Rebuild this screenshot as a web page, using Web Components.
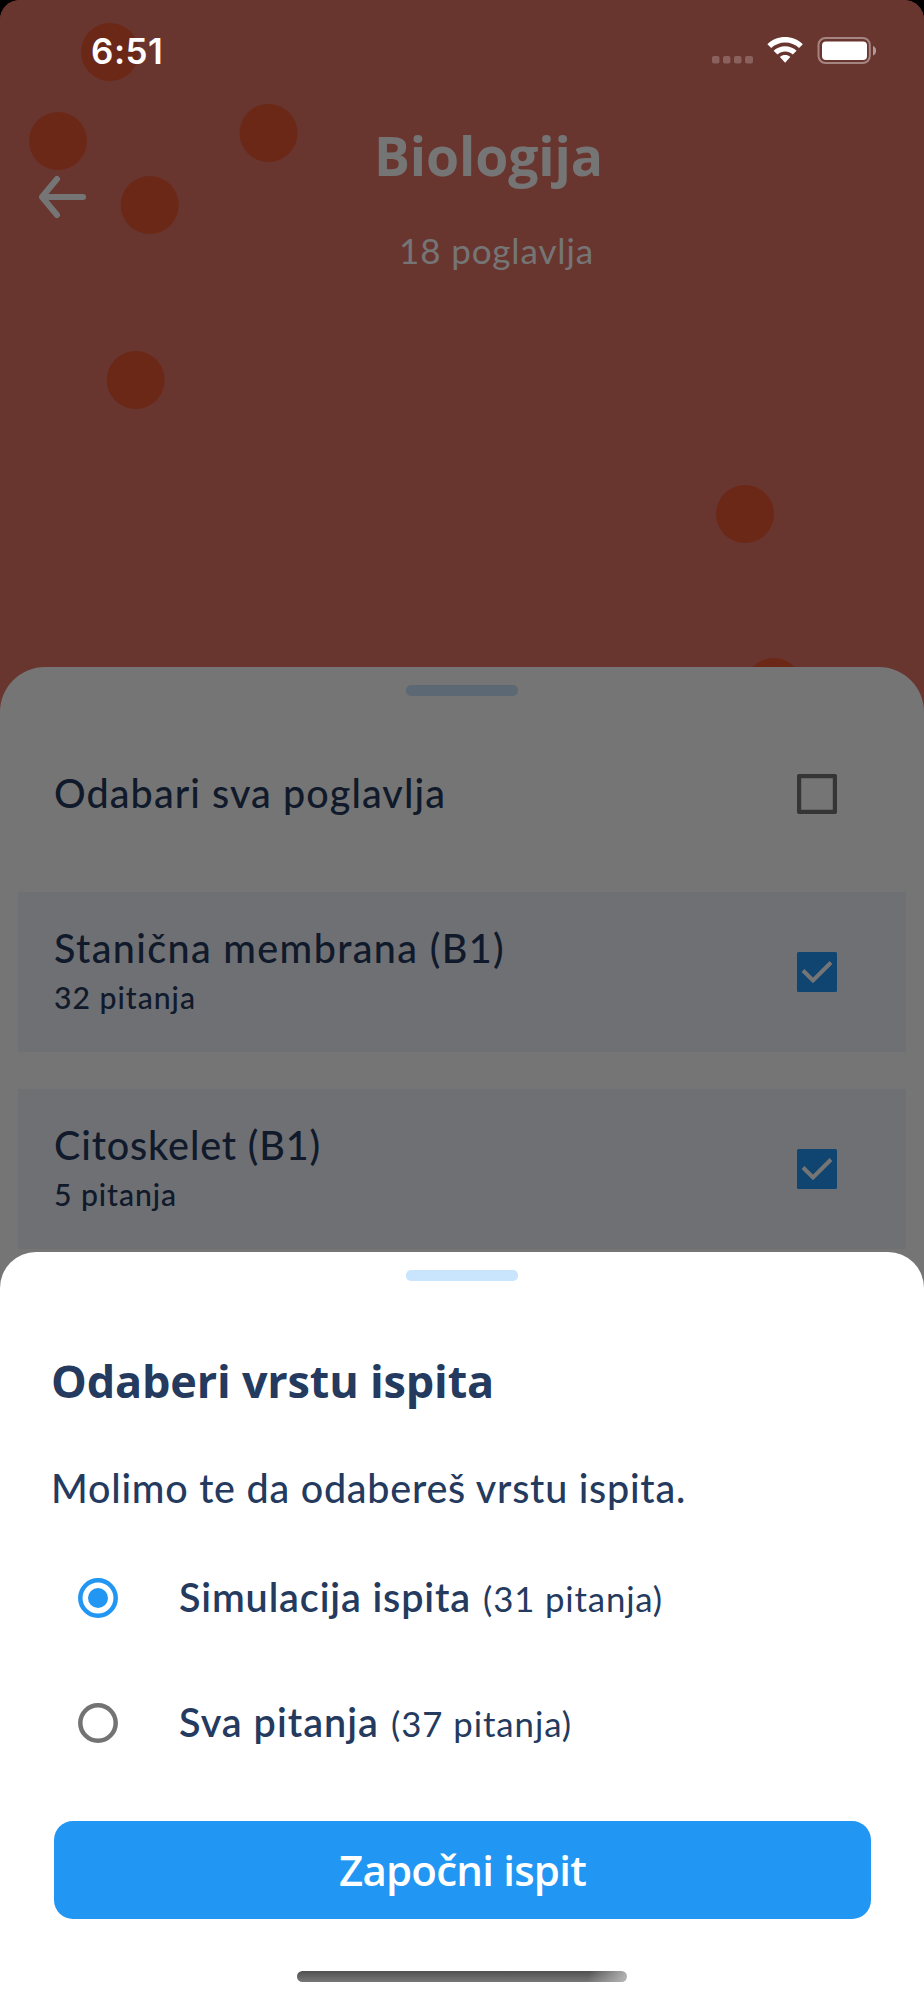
<!DOCTYPE html>
<html lang="hr">
<head>
  <meta charset="UTF-8">
  <meta name="viewport" content="width=device-width, initial-scale=1.0">
  <title>Biologija</title>
  <style>
    html { background: #000; }
    body {
      margin: 0;
      color: #243a5e;
      font-family: "Lato", sans-serif;
    }
  </style>
</head>
<body>
  <exam-screen>
    <status-bar slot="status">6:51</status-bar>
    <subject-header slot="page">
      <fit-text w="229" slot="title">Biologija</fit-text>
      <fit-text w="195" slot="subtitle">18 poglavlja</fit-text>
    </subject-header>
    <bottom-sheet slot="page" class="chapters">
      <chapter-row class="all"><fit-text w="392">Odabari sva poglavlja</fit-text></chapter-row>
      <chapter-row checked>
        <fit-text w="451">Stanična membrana (B1)</fit-text>
        <fit-text w="142" slot="count">32 pitanja</fit-text>
      </chapter-row>
      <chapter-row checked>
        <fit-text w="267">Citoskelet (B1)</fit-text>
        <fit-text w="123" slot="count">5 pitanja</fit-text>
      </chapter-row>
    </bottom-sheet>
    <bottom-sheet slot="dialog" class="dialog">
      <exam-dialog>
        <fit-text w="443" slot="title">Odaberi vrstu ispita</fit-text>
        <fit-text w="635" slot="message">Molimo te da odabereš vrstu ispita.</fit-text>
        <radio-option slot="options" checked>
          <fit-text w="292">Simulacija ispita</fit-text>
          <fit-text w="180" slot="note">(31 pitanja)</fit-text>
        </radio-option>
        <radio-option slot="options">
          <fit-text w="200">Sva pitanja</fit-text>
          <fit-text w="181" slot="note">(37 pitanja)</fit-text>
        </radio-option>
        <fit-text w="247" slot="action">Započni ispit</fit-text>
      </exam-dialog>
    </bottom-sheet>
  </exam-screen>

  <script>
    function define(name, html, setup) {
      customElements.define(name, class extends HTMLElement {
        constructor() {
          super();
          this.attachShadow({ mode: 'open' });
          this.shadowRoot.innerHTML = html;
        }

        connectedCallback() {
          if (setup) setup(this);
        }
      });
    }

    define('exam-screen', `
      <style>
        :host {
          display: block;
          position: relative;
          width: 924px;
          height: 2000px;
          overflow: hidden;
          border-radius: 20px 20px 0 0;
          background: #e47366;
        }
        .scrim {
          position: absolute;
          inset: 0;
          background: rgba(0, 0, 0, .54);
        }
        .overlay {
          position: absolute;
          inset: 0;
          display: flex;
          flex-direction: column;
          justify-content: space-between;
        }
        .home {
          position: absolute;
          left: 297px;
          bottom: 18px;
          width: 330px;
          height: 11px;
          border-radius: 6px;
          background:
            linear-gradient(100deg, transparent 88%, rgba(190, 190, 190, .9) 100%),
            linear-gradient(#505050, #777);
        }
      </style>
      <slot name="page"></slot>
      <div class="scrim"></div>
      <div class="overlay">
        <slot name="status"></slot>
        <slot name="dialog"></slot>
      </div>
      <div class="home"></div>
    `);

    define('status-bar', `
      <style>
        :host {
          display: flex;
          align-items: center;
          justify-content: space-between;
          box-sizing: border-box;
          height: 102px;
          padding: 0 48px 0 91px;
          color: #fff;
          font: 600 35px/40px "Inter", sans-serif;
          letter-spacing: .5px;
        }
        svg { display: block; }
      </style>
      <slot></slot>
      <svg width="166" height="30" viewBox="0 0 166 30" fill="#fff">
        <g fill-opacity=".22">
          <rect x="2" y="20" width="7.5" height="7.5" rx="2"/>
          <rect x="13" y="20" width="7.5" height="7.5" rx="2"/>
          <rect x="24" y="20" width="7.5" height="7.5" rx="2"/>
          <rect x="35" y="20" width="8" height="7.5" rx="2"/>
        </g>
        <path d="M57.4 8.2C67 -1.3 83 -1.3 92.8 8.2L89.1 12C81.3 4.6 69.2 4.6 61.2 12Z"/>
        <path d="M63.6 14.7C69.9 8.6 80.3 8.6 86.6 14.7L82.8 18.5C78.5 14.5 71.8 14.5 67.4 18.5Z"/>
        <path d="M69.9 21C72.8 18.4 77.4 18.4 80.3 21L75.1 26.7Z"/>
        <rect x="108.5" y="1.9" width="51.3" height="25.2" rx="7" fill="none" stroke="#fff" stroke-opacity=".4" stroke-width="2"/>
        <rect x="112" y="5.5" width="45" height="18.5" rx="4"/>
        <path d="M163 10C167.2 11.5 167.2 18 163 19.5Z" fill-opacity=".5"/>
      </svg>
    `);

    define('subject-header', `
      <style>
        :host {
          display: block;
          position: relative;
          height: 667px;
          color: #fff;
        }
        .dots {
          position: absolute;
          left: 0;
          top: 0;
          fill: #e95730;
        }
        .bar {
          position: relative;
          display: flex;
          align-items: flex-start;
        }
        .back { margin: 174px 0 0 36px; }
        .text {
          display: flex;
          flex-direction: column;
          margin-left: 286px;
          padding-top: 120px;
        }
        .title { font: 700 53.5px/72px "Open Sans", sans-serif; }
        .subtitle { margin: 36px 0 0 25px; font-size: 35px; line-height: 44px; }
      </style>
      <svg class="dots" width="924" height="760">
        <circle cx="110" cy="52" r="29"/>
        <circle cx="58" cy="141" r="29"/>
        <circle cx="268.5" cy="133" r="29"/>
        <circle cx="149.7" cy="205" r="29"/>
        <circle cx="135.7" cy="380" r="29"/>
        <circle cx="745" cy="514" r="29"/>
        <circle cx="773.7" cy="687" r="29"/>
      </svg>
      <div class="bar">
        <svg class="back" width="52" height="46" fill="none" stroke="#fff" stroke-width="6" stroke-linecap="round" stroke-linejoin="round">
          <path d="M21 5L6 23L21 41M6 23H47"/>
        </svg>
        <div class="text">
          <div class="title"><slot name="title"></slot></div>
          <div class="subtitle"><slot name="subtitle"></slot></div>
        </div>
      </div>
    `);

    // Sheet with rounded top corners and a drag handle
    define('bottom-sheet', `
      <style>
        :host {
          display: flex;
          flex-direction: column;
          position: relative;
          box-sizing: border-box;
          background: #fff;
        }
        :host(.chapters) { height: 1333px; border-radius: 45px 45px 0 0; }
        :host(.dialog) { height: 748px; border-radius: 36px 36px 0 0; }
        .handle {
          flex: none;
          align-self: center;
          width: 112px;
          height: 11px;
          margin-top: 18px;
          border-radius: 5px;
          background: #c8e5fd;
        }
      </style>
      <div class="handle"></div>
      <slot></slot>
    `);

    define('chapter-row', `
      <style>
        :host {
          display: flex;
          justify-content: space-between;
          align-items: center;
          box-sizing: border-box;
          height: 160px;
          margin: 0 18px 37px;
          padding: 0 69px 0 36px;
        }
        :host(.all) { margin-top: 18px; margin-bottom: 18px; }
        :host([checked]) { background: #f1f4fc; }
        .text { display: flex; flex-direction: column; }
        .name { margin-top: -2px; font-size: 39.5px; line-height: 50px; font-weight: 500; }
        .count { margin-top: 1px; font-size: 30.2px; line-height: 46px; font-weight: 500; }
        :host(.all) .count { display: none; }
        svg { display: block; }
      </style>
      <div class="text">
        <div class="name"><slot></slot></div>
        <div class="count"><slot name="count"></slot></div>
      </div>
      <svg width="40" height="40"></svg>
    `, (el) => {
      el.shadowRoot.querySelector('svg').innerHTML = el.hasAttribute('checked')
        ? '<rect width="40" height="40" rx="1.5" fill="#2296f3"/><path d="M6 18.5L16 28.5L34 10.5" fill="none" stroke="#fff" stroke-width="4"/>'
        : '<rect x="2" y="2" width="36" height="36" rx="1" fill="none" stroke="#737373" stroke-width="4.4"/>';
    });

    define('exam-dialog', `
      <style>
        :host { display: flex; flex-direction: column; padding: 0 53px; }
        .title { margin: 69px 0 0 -2px; font: 700 45px/62px "Open Sans", sans-serif; }
        .message { margin: 51px 0 0 -2px; font-size: 39.5px; line-height: 50px; font-weight: 500; }
        .options { display: flex; flex-direction: column; gap: 65px; margin-top: 55px; }
        button {
          height: 98px;
          margin: 68px 0 0 1px;
          padding: 0;
          border: 0;
          border-radius: 19px;
          background: #2296f3;
          color: #fff;
          font: 600 42px/60px "Open Sans", sans-serif;
        }
      </style>
      <div class="title"><slot name="title"></slot></div>
      <div class="message"><slot name="message"></slot></div>
      <div class="options"><slot name="options"></slot></div>
      <button><slot name="action"></slot></button>
    `);

    define('radio-option', `
      <style>
        :host {
          display: flex;
          align-items: center;
          height: 60px;
          padding-left: 25px;
        }
        .label { display: flex; align-items: baseline; margin: -3px 0 0 61px; gap: 12px; }
        .name { font-size: 39.5px; line-height: 60px; font-weight: 600; }
        .note { font-size: 34.8px; }
        .off { stroke: #737373; }
        .on { stroke: #2296f3; }
        .dot { display: none; fill: #2296f3; stroke: none; }
        :host([checked]) .dot { display: block; }
      </style>
      <svg width="40" height="40" fill="none" stroke-width="4.5">
        <circle class="ring" cx="20" cy="20" r="17.7"/>
        <circle class="dot" cx="20" cy="20" r="10"/>
      </svg>
      <div class="label">
        <span class="name"><slot></slot></span>
        <span class="note"><slot name="note"></slot></span>
      </div>
    `, (el) => {
      el.shadowRoot.querySelector('.ring').classList.add(el.hasAttribute('checked') ? 'on' : 'off');
    });

    // Spreads its letters so that the line comes out at the given width
    define('fit-text', `
      <style>
        :host { display: inline-block; white-space: nowrap; }
      </style>
      <slot></slot>
    `, (el) => {
      const natural = el.getBoundingClientRect().width;
      const count = el.textContent.length;
      el.style.letterSpacing = (Number(el.getAttribute('w')) - natural) / count + 'px';
    });
  </script>
</body>
</html>
